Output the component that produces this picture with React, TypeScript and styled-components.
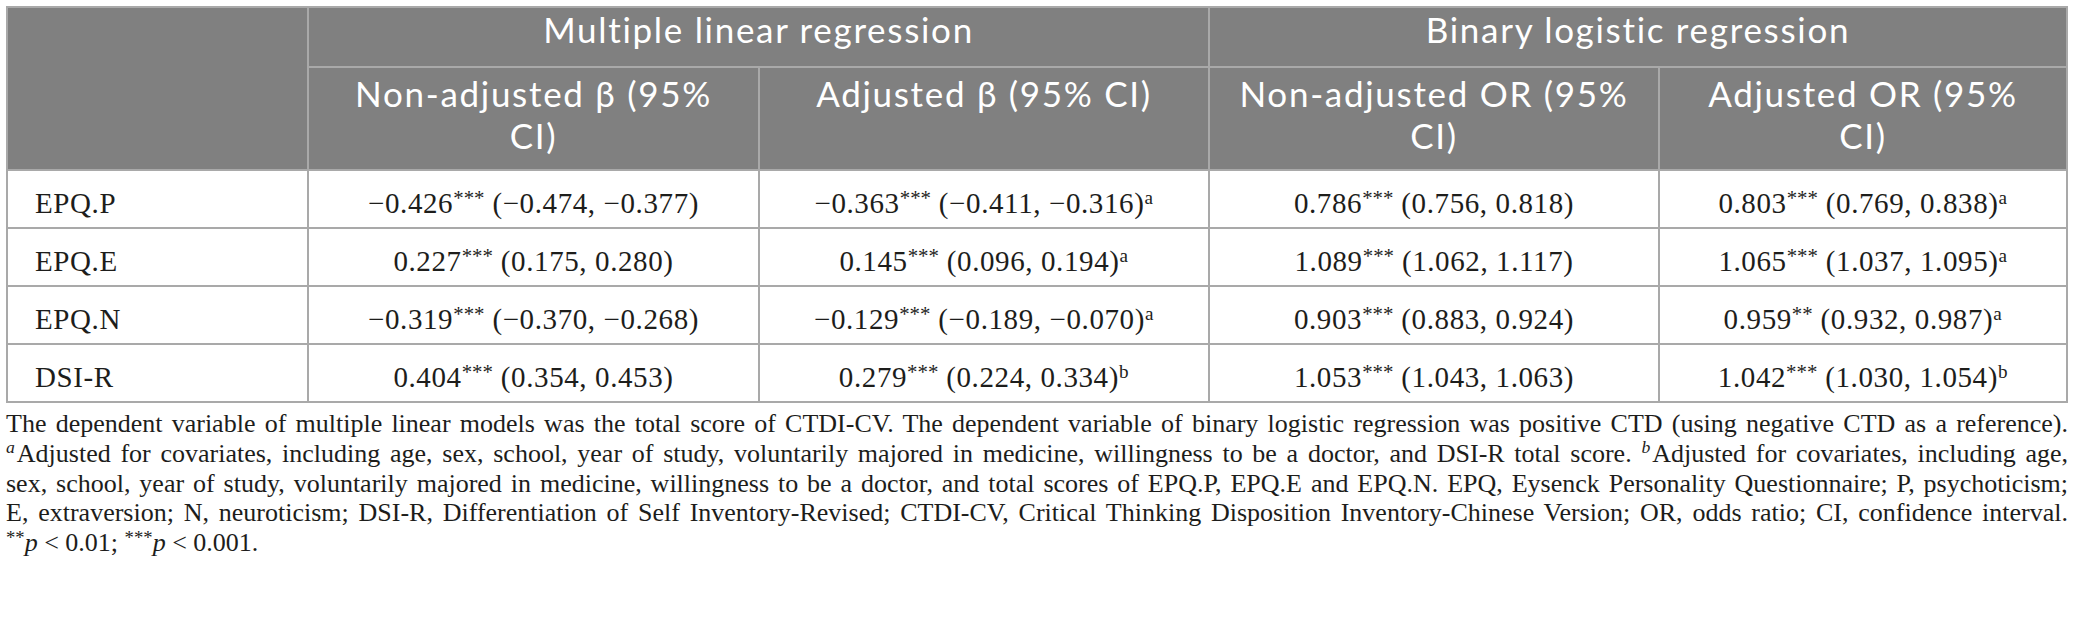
import React from 'react';
import styled, { createGlobalStyle } from 'styled-components';

const GlobalStyle = createGlobalStyle`
  body {
    margin: 0;
    background: #ffffff;
  }
`;

type Cell = {
  value: string;
  stars: string;
  ci: string;
  note?: string;
};

type Row = {
  label: string;
  cells: Cell[];
};

const rows: Row[] = [
  {
    label: 'EPQ.P',
    cells: [
      { value: '−0.426', stars: '***', ci: '(−0.474, −0.377)' },
      { value: '−0.363', stars: '***', ci: '(−0.411, −0.316)', note: 'a' },
      { value: '0.786', stars: '***', ci: '(0.756, 0.818)' },
      { value: '0.803', stars: '***', ci: '(0.769, 0.838)', note: 'a' },
    ],
  },
  {
    label: 'EPQ.E',
    cells: [
      { value: '0.227', stars: '***', ci: '(0.175, 0.280)' },
      { value: '0.145', stars: '***', ci: '(0.096, 0.194)', note: 'a' },
      { value: '1.089', stars: '***', ci: '(1.062, 1.117)' },
      { value: '1.065', stars: '***', ci: '(1.037, 1.095)', note: 'a' },
    ],
  },
  {
    label: 'EPQ.N',
    cells: [
      { value: '−0.319', stars: '***', ci: '(−0.370, −0.268)' },
      { value: '−0.129', stars: '***', ci: '(−0.189, −0.070)', note: 'a' },
      { value: '0.903', stars: '***', ci: '(0.883, 0.924)' },
      { value: '0.959', stars: '**', ci: '(0.932, 0.987)', note: 'a' },
    ],
  },
  {
    label: 'DSI-R',
    cells: [
      { value: '0.404', stars: '***', ci: '(0.354, 0.453)' },
      { value: '0.279', stars: '***', ci: '(0.224, 0.334)', note: 'b' },
      { value: '1.053', stars: '***', ci: '(1.043, 1.063)' },
      { value: '1.042', stars: '***', ci: '(1.030, 1.054)', note: 'b' },
    ],
  },
];

const subHeads = [
  ['Non-adjusted β (95%', 'CI)'],
  ['Adjusted β (95% CI)'],
  ['Non-adjusted OR (95%', 'CI)'],
  ['Adjusted OR (95%', 'CI)'],
];

const App = () => {
  return (
    <>
      <GlobalStyle />
      <Page>
        <Grid>
          <Corner />
          <GroupHead>Multiple linear regression</GroupHead>
          <GroupHead>Binary logistic regression</GroupHead>
          {subHeads.map((lines, i) => (
            <SubHead key={i}>
              {lines.map((line, j) => (
                <div key={j}>{line}</div>
              ))}
            </SubHead>
          ))}
          {rows.map((row) => (
            <React.Fragment key={row.label}>
              <LabelCell>{row.label}</LabelCell>
              {row.cells.map((cell, i) => (
                <ValueCell key={i}>
                  {cell.value}
                  <Stars>{cell.stars}</Stars> {cell.ci}
                  {cell.note && <Note>{cell.note}</Note>}
                </ValueCell>
              ))}
            </React.Fragment>
          ))}
        </Grid>
        <Footnotes>
          <Line>
            The dependent variable of multiple linear models was the total score of CTDI-CV. The dependent variable of
            binary logistic regression was positive CTD (using negative CTD as a reference).
          </Line>
          <Line>
            <Mark>a</Mark>Adjusted for covariates, including age, sex, school, year of study, voluntarily majored in
            medicine, willingness to be a doctor, and DSI-R total score. <Mark>b</Mark>Adjusted for covariates, including
            age,
          </Line>
          <Line>
            sex, school, year of study, voluntarily majored in medicine, willingness to be a doctor, and total scores of
            EPQ.P, EPQ.E and EPQ.N. EPQ, Eysenck Personality Questionnaire; P, psychoticism;
          </Line>
          <Line>
            E, extraversion; N, neuroticism; DSI-R, Differentiation of Self Inventory-Revised; CTDI-CV, Critical Thinking
            Disposition Inventory-Chinese Version; OR, odds ratio; CI, confidence interval.
          </Line>
          <Line last>
            <FootStars>**</FootStars>
            <Italic>p</Italic> &lt; 0.01; <FootStars>***</FootStars>
            <Italic>p</Italic> &lt; 0.001.
          </Line>
        </Footnotes>
      </Page>
    </>
  );
};

export default App;

const Page = styled.div`
  padding: 6px 0 0 6px;
  width: 2062px;
`;

const Grid = styled.div`
  display: grid;
  grid-template-columns: 299px 449px 448px 448px 406px;
  grid-template-rows: 58px 101px repeat(4, 56px);
  gap: 2px;
  padding: 2px;
  width: 2062px;
  box-sizing: border-box;
  background: #a9a9a9;
`;

const HeadBase = styled.div`
  background: #808080;
  color: #ffffff;
  font-family: Lato, 'Open Sans', sans-serif;
  font-weight: 400;
  font-size: 35px;
  letter-spacing: 1.7px;
  text-align: center;
  white-space: nowrap;
`;

const Corner = styled(HeadBase)`
  grid-row: span 2;
`;

const GroupHead = styled(HeadBase)`
  grid-column: span 2;
  display: flex;
  align-items: center;
  justify-content: center;
  padding-bottom: 16px;
  line-height: 1.2;
`;

const SubHead = styled(HeadBase)`
  padding-top: 4px;
  line-height: 42px;
`;

const BodyCell = styled.div`
  background: #ffffff;
  font-family: 'Liberation Serif', 'Times New Roman', serif;
  font-size: 29px;
  letter-spacing: 0.6px;
  line-height: 32px;
  color: #1d1d1b;
  padding-top: 16px;
  white-space: nowrap;
`;

const LabelCell = styled(BodyCell)`
  text-align: left;
  padding-left: 27px;
`;

const ValueCell = styled(BodyCell)`
  text-align: center;
`;

const Stars = styled.span`
  font-size: 0.72em;
  vertical-align: 0.36em;
  line-height: 0;
  letter-spacing: 0;
`;

const Note = styled.span`
  font-size: 0.66em;
  vertical-align: 0.46em;
  line-height: 0;
`;

const Footnotes = styled.div`
  margin-top: 6px;
  font-family: 'Liberation Serif', 'Times New Roman', serif;
  font-size: 26px;
  line-height: 29.75px;
  color: #1d1d1b;
`;

const Line = styled.div<{ last?: boolean }>`
  text-align: justify;
  text-align-last: ${(p) => (p.last ? 'left' : 'justify')};
  white-space: nowrap;
`;

const Mark = styled.span`
  font-style: italic;
  font-size: 0.68em;
  vertical-align: 0.5em;
  line-height: 0;
  margin-right: 2px;
`;

const FootStars = styled.span`
  font-size: 0.72em;
  vertical-align: 0.4em;
  line-height: 0;
`;

const Italic = styled.span`
  font-style: italic;
`;
